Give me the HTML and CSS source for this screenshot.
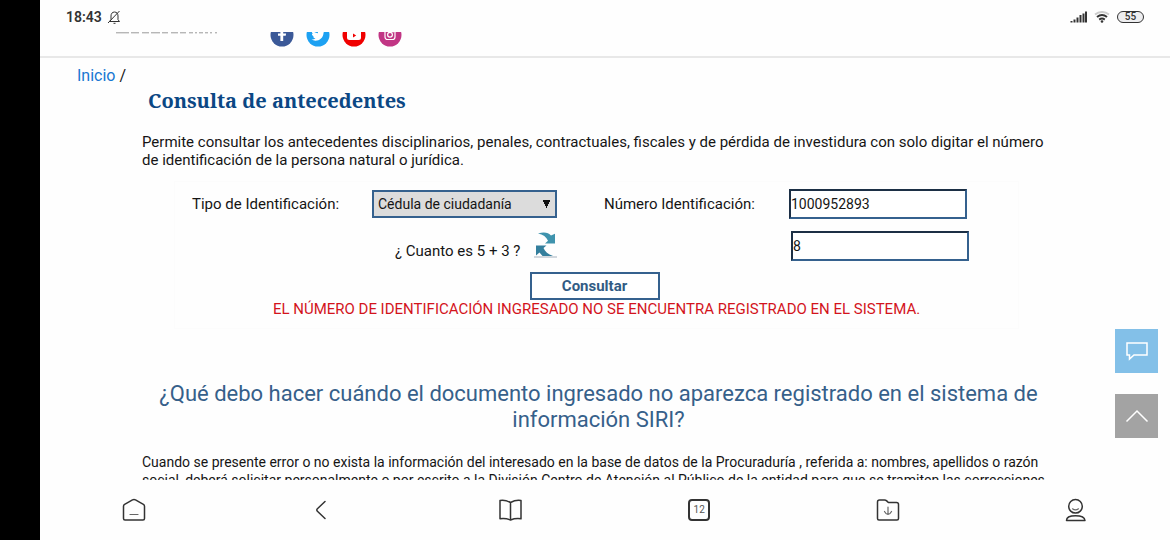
FILE: index.html
```html
<!DOCTYPE html>
<html lang="es">
<head>
<meta charset="utf-8">
<meta name="viewport" content="width=device-width, initial-scale=1">
<title>Consulta de antecedentes</title>
<link rel="stylesheet" href="styles.css">
</head>
<body>
<div class="screen">
  <div class="status">
    <span class="clock">18:43</span>
    <svg class="bell" viewBox="0 0 14 14" aria-hidden="true"><path d="M2.500 11.500h10l-1.500-1.800V6c0-2.200-1.200-4-3.500-4S4 3.800 4 6v3.700zM6.500 13.300h2M1 13L12.500 1"/></svg>
    <svg class="signal" viewBox="0 0 17 12" aria-hidden="true"><path d="M1.500 11.500V10M4.500 11.500V8.500M7.500 11.500V6.500M10.500 11.500V4M13.500 11.500V2.500M16 11.500V.5"/></svg>
    <svg class="wifi" viewBox="0 0 16 12" aria-hidden="true"><path class="weak" d="M1 3.500q7-5 14 0"/><path d="M3 6q5-4 10 0M5.200 8.600q2.800-2 5.600 0"/><circle cx="8" cy="10.500" r="1.300"/></svg>
    <span class="battery">55</span>
  </div>
  <div class="page">
    <header class="site-header">
      <svg class="logo" viewBox="0 0 102 2" aria-hidden="true"><path d="M0 .8h13M15 .8h8M26 .8h7M35 .8h9M46 .8h6M55 .8h7M64 .8h6M73 .8h4M79 .8h2M83 .8h4M89 .8h3M94 .8h2M99 .8h2"/></svg>
      <nav class="social" aria-label="Redes sociales">
        <a href="#" aria-label="Facebook"><svg viewBox="0 0 24 24"><circle cx="12" cy="12" r="11.500" fill="#3b5998"/><path d="M13.200 18v-5.200h2.500l.4-2.300h-2.900V8.700c0-.9.400-1.500 1.500-1.500H16V5h-2c-2.300 0-3.600 1.200-3.600 3.500v2H8v2.300h2.400V18z" fill="#fff"/></svg></a>
        <a href="#" aria-label="Twitter"><svg viewBox="0 0 24 24"><circle cx="12" cy="12" r="11.500" fill="#1da1f2"/><path d="M19 8l-1.500.6L18.600 7l-1.800.7a2.800 2.800 0 0 0-4.800 2.500C9.600 10 7.700 9 6.300 7.300c-.8 1.500-.3 3 .8 3.800l-1.200-.3c0 1.300.9 2.400 2.200 2.700H7c.4 1.100 1.300 1.900 2.500 1.900A5.500 5.500 0 0 1 5.400 16.500c5 3 12-.1 12.200-7.100z" fill="#fff"/></svg></a>
        <a href="#" aria-label="YouTube"><svg viewBox="0 0 24 24"><circle cx="12" cy="12" r="11.500" fill="#f00000"/><rect x="5" y="6.500" width="14" height="10.500" rx="2.500" fill="#fff"/><path d="M11 10.500v4l3.200-2z" fill="#f00000"/></svg></a>
        <a href="#" aria-label="Instagram"><svg viewBox="0 0 24 24"><circle cx="12" cy="12" r="11.500" fill="#c13584"/><g fill="none" stroke="#fff" stroke-width="1.200"><rect x="7" y="6.500" width="10" height="10" rx="2.500"/><circle cx="12" cy="11.700" r="2.400"/></g><circle cx="15" cy="8.800" r=".7" fill="#fff"/></svg></a>
      </nav>
    </header>
    <nav class="crumbs" aria-label="Ruta"><a href="#">Inicio</a> /</nav>
    <main class="content">
      <h1 class="title">Consulta de antecedentes</h1>
      <p class="text">Permite consultar los antecedentes disciplinarios, penales, contractuales, fiscales y de pérdida de investidura con solo digitar el número de identificación de la persona natural o jurídica.</p>
      <form class="query">
        <div class="fields">
          <label for="tipo">Tipo de Identificación:</label>
          <select class="control" id="tipo"><option>Cédula de ciudadanía</option></select>
          <label class="number-label" for="numero">Número Identificación:</label>
          <input class="control" id="numero" type="text" value="1000952893">
        </div>
        <div class="fields captcha">
          <div class="question">
            <label for="respuesta">¿ Cuanto es 5 + 3 ?</label>
            <button class="refresh" type="button" aria-label="Cambiar pregunta"><svg viewBox="0 0 24 26"><path d="M4 1.500c6-2 10.500-1 13 2l4-1.700V11.500H11l3-2.700C12.500 5 9 2.500 4 1.500z" fill="#3f93ad"/><path d="M2 13.500h10.500l-3 2.500c1.500 3.500 4.500 6.200 9.500 8H8.500L5.500 20.500 2 23.500z" fill="#347f9d"/><path d="M0 25h23" stroke="#b3bdc7" stroke-width="1.200"/></svg></button>
          </div>
          <input class="control" id="respuesta" type="text" value="8">
        </div>
        <button class="submit" type="button">Consultar</button>
        <p class="error" role="alert">EL NÚMERO DE IDENTIFICACIÓN INGRESADO NO SE ENCUENTRA REGISTRADO EN EL SISTEMA.</p>
      </form>
      <h2 class="subtitle">¿Qué debo hacer cuándo el documento ingresado no aparezca registrado en el sistema de información SIRI?</h2>
      <p class="text small">Cuando se presente error o no exista la información del interesado en la base de datos de la Procuraduría , referida a: nombres, apellidos o razón social, deberá solicitar personalmente o por escrito a la División Centro de Atención al Público de la entidad para que se tramiten las correcciones</p>
    </main>
    <div class="floating">
      <button class="chat" type="button" aria-label="Chat"><svg viewBox="0 0 24 20"><path d="M2 2h20v12H9l-4.500 4v-4H2z"/></svg></button>
      <button class="top" type="button" aria-label="Subir"><svg viewBox="0 0 24 20"><path d="M1.500 15.500L12 5l10.500 10.500"/></svg></button>
    </div>
  </div>
  <nav class="toolbar" aria-label="Navegador">
    <button type="button" aria-label="Inicio"><svg viewBox="0 0 24 24"><path d="M12 1.500q-.8 0-1.500.4L2.600 6.300Q1.500 7 1.500 8.200v12.300q0 1.500 1.500 1.500h18q1.500 0 1.500-1.500V8.200q0-1.200-1.100-1.900l-7.900-4.400q-.7-.4-1.500-.4z"/><path class="fine" d="M8 16.500h8"/></svg></button>
    <button type="button" aria-label="Atrás"><svg viewBox="0 0 24 24"><path d="M15 3.500l-7.600 7.300q-1.200 1.200 0 2.400l7.600 7.300"/></svg></button>
    <button type="button" aria-label="Lectura"><svg viewBox="0 0 24 24"><path d="M11.500 4.500Q6 1.500 1 2.500v18.300q5.500-.8 10.500 1.200 5-2 10.500-1.200V2.500Q17 1.500 11.500 4.500zM11.500 4.500V22"/></svg></button>
    <button class="tabs" type="button" aria-label="Pestañas: 12">12</button>
    <button type="button" aria-label="Descargas"><svg viewBox="0 0 24 24"><path d="M1.500 20.500V4q0-2 2-2h5q1.300 0 2.200.9l1 1q.8.700 2 .7h6.800q2 0 2 2v13.900q0 1.500-1.500 1.500H3q-1.500 0-1.500-1.500z"/><path class="fine" d="M12 9v7.500M8.500 13.500Q10 16.300 12 16.500q2-.2 3.500-3"/></svg></button>
    <button type="button" aria-label="Perfil"><svg viewBox="0 0 24 24"><path d="M11.500 1.500a6.800 6.800 0 1 1 0 13.600 6.800 6.800 0 1 1 0-13.600zM2.500 22.500q0-4.700 9-4.700t9.500 4.700z"/><path class="fine" d="M8.500 10.800q3 2.200 6 0"/></svg></button>
  </nav>
</div>
</body>
</html>
```
FILE: styles.css
```css
* { box-sizing: border-box; }

body {
  margin: 0;
  background: #000;
  color: #151515;
  font: 15px/18px Roboto, "Liberation Sans", sans-serif;
}

h1, h2, p { margin: 0; font-weight: 400; }
a { text-decoration: none; }
button { font: inherit; cursor: pointer; }
svg { display: block; }

.screen {
  display: flex;
  flex-direction: column;
  height: 100vh;
  margin-left: 40px;
  background: #fefefe;
}

.status {
  display: flex;
  align-items: center;
  height: 32px;
  padding: 2px 26px 0;
  flex: none;
  color: #333;
}
.clock { font-size: 14px; font-weight: 600; }
.status svg { fill: none; stroke: #333; }
.bell { width: 14px; height: 14px; margin-left: 5px; }
.signal { width: 17px; height: 12px; margin-left: auto; stroke-width: 2; }
.wifi { width: 16px; height: 12px; margin: 0 7px; stroke-width: 2; }
.wifi .weak { stroke: #ccc; }
.wifi circle { fill: #333; stroke: none; }
.battery {
  width: 27px;
  border: 1px solid #333;
  border-radius: 6px;
  background: #eeeef0;
  font-size: 10px;
  font-weight: 500;
  line-height: 10px;
  text-align: center;
}

.page { position: relative; flex: 1; min-height: 0; overflow: hidden; }

.site-header {
  display: flex;
  height: 26px;
  padding-left: 76px;
  overflow: hidden;
  border-bottom: 2px solid #e8e8e8;
}
.logo { width: 102px; height: 2px; stroke: #999; fill: none; }
.social {
  display: flex;
  align-items: flex-end;
  gap: 12px;
  margin-left: 52px;
  padding-bottom: 9px;
}
.social svg { width: 24px; height: 24px; }

.crumbs { padding: 8px 37px 0; font-size: 16px; line-height: 20px; }
.crumbs a { color: #1877d2; }

.content { margin: 0 115px 0 102px; }

.title {
  padding-left: 6px;
  color: #0b4784;
  font: 700 20px/30px "Noto Serif", "Droid Serif", "Liberation Serif", serif;
}
.text { margin-top: 17px; }

.query {
  display: flex;
  flex-direction: column;
  align-items: center;
  margin: 12px 36px 0 32px;
  padding: 7px 17px 10px;
  border: 1px solid #fcfcfc;
}
.fields {
  display: grid;
  grid-template-columns: 180px 185px 1fr 178px;
  align-items: center;
  width: 100%;
  padding-right: 34px;
}
.number-label { padding-left: 47px; }
.control {
  width: 100%;
  height: 30px;
  margin: 0;
  padding: 0;
  border: 2px solid #35618e;
  border-radius: 0;
  background: #fff;
  color: #151515;
  font: inherit;
  font-size: 14px;
}
input.control { border-top-color: #1c2f45; border-left-color: #1c2f45; }
select.control {
  height: 28px;
  padding: 0 4px;
  appearance: none;
  background:
    conic-gradient(from -27deg at 50% 100%, #111 54deg, transparent 0) right 5px center / 7px 8px no-repeat,
    #dcdcdc;
}
.captcha { margin-top: 12px; padding-right: 32px; }
.question {
  display: flex;
  grid-column: 1 / 4;
  align-items: flex-end;
  gap: 14px;
  padding-left: 203px;
}
.refresh { padding: 0 0 2px; border: 0; background: none; }
.refresh svg { width: 24px; height: 26px; }

.submit {
  width: 130px;
  height: 28px;
  margin: 11px 4px 0 0;
  padding: 0;
  border: 2px solid #35618e;
  background: #fff;
  color: #315b84;
  font-weight: 700;
}
.error { color: #d3141c; }

.subtitle {
  margin-top: 52px;
  color: #36608a;
  font-size: 22px;
  line-height: 26px;
  text-align: center;
}
.small { margin-top: 20px; font-size: 14px; }

.floating {
  position: absolute;
  right: 12px;
  bottom: 42px;
  display: grid;
  gap: 21px;
}
.floating button {
  display: grid;
  place-items: center;
  width: 43px;
  height: 44px;
  padding: 0;
  border: 0;
}
.chat { background: #83c0e8; }
.top { background: #a3a3a3; }
.floating svg {
  width: 24px;
  height: 20px;
  fill: none;
  stroke: #fff;
  stroke-width: 1.5;
}

.toolbar {
  display: flex;
  flex: none;
  align-items: center;
  justify-content: space-between;
  height: 60px;
  padding: 0 82px;
}
.toolbar button {
  width: 24px;
  height: 24px;
  padding: 0;
  border: 0;
  background: none;
}
.toolbar svg {
  width: 24px;
  height: 24px;
  fill: none;
  stroke: #333;
  stroke-width: 1.5;
  stroke-linecap: round;
  stroke-linejoin: round;
}
.toolbar .fine { stroke: #666; stroke-width: 1.2; }
.toolbar .tabs {
  width: 22px;
  height: 22px;
  margin: 0 1px;
  border: 2px solid #333;
  border-radius: 4px;
  color: #555;
  font-size: 10px;
  line-height: 18px;
}
```
